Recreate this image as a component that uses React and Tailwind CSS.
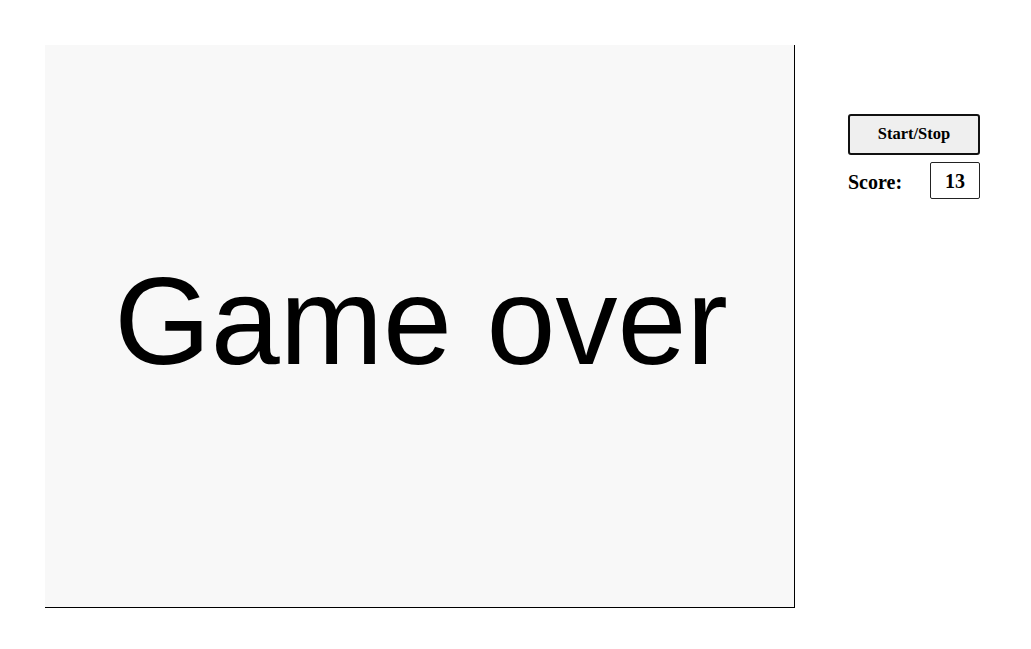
import React from 'react'

export default function App() {
  return (
    <div className="flex min-h-[649px] bg-white pl-[45px] pt-[45px]">
      {/* game canvas */}
      <div className="flex h-[563px] w-[750px] shrink-0 items-center justify-center border-r border-b border-black bg-[#f8f8f8]">
        <span className="font-['Liberation_Sans',Arial,sans-serif] text-[124px] leading-none text-black -mt-[10px] ml-[3px]">
          Game over
        </span>
      </div>

      {/* controls */}
      <div className="ml-[53px] mt-[69px] flex w-[132px] flex-col font-['Liberation_Serif','Times_New_Roman',serif] font-bold text-black">
        <button className="h-[41px] w-[132px] rounded-[3px] border-2 border-[#111] bg-[#efefef] text-[16.5px]">
          Start/Stop
        </button>
        <div className="mt-[7px] flex items-center justify-between">
          <span className="text-[20px] mt-[2px]">Score:</span>
          <div className="flex h-[37px] w-[50px] items-center justify-center rounded-[2px] border border-[#222] text-[20px]">
            13
          </div>
        </div>
      </div>
    </div>
  )
}
